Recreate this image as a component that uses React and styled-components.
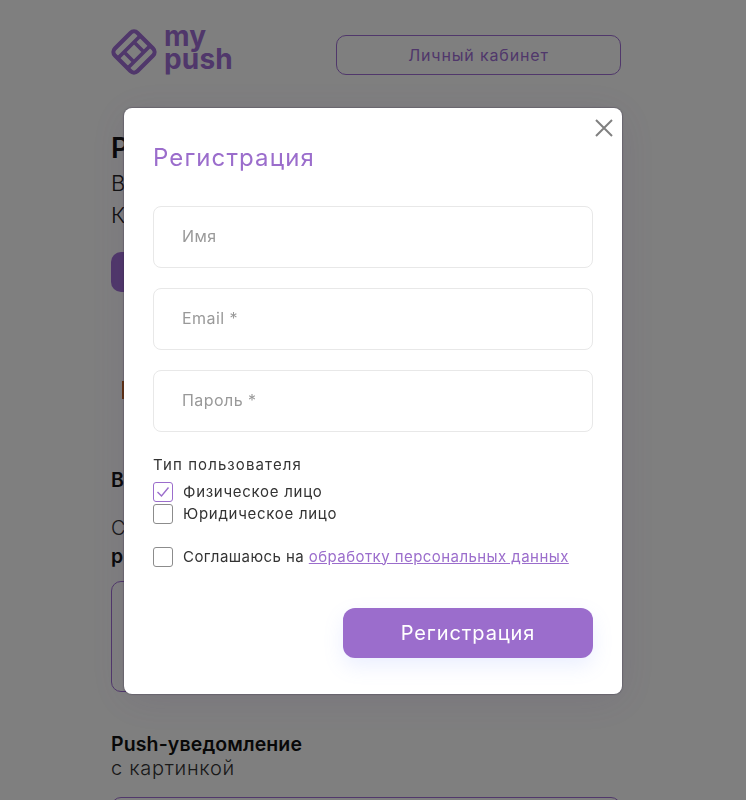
import styled, { createGlobalStyle } from "styled-components";

const GlobalStyle = createGlobalStyle`
  html, body {
    margin: 0;
    padding: 0;
    background: #fff;
  }
  * {
    box-sizing: border-box;
  }
`;

const font = `"Inter", "Open Sans", sans-serif`;
const purple = "#9b6dcc";
const dimPurple = "#a06fd6";

const Logo = () => (
  <svg width="46" height="46" viewBox="0 0 46 46" fill="none" stroke={dimPurple} strokeWidth="3.6" strokeLinejoin="round">
    <g transform="rotate(45 23 23)">
      <rect x="7" y="7" width="32" height="32" rx="5" strokeWidth="4.2" />
      <path d="M16 7 V39 M30 7 V39 M16 16 H30 M16 30 H30" />
    </g>
  </svg>
);

const App = () => {
  return (
    <>
      <GlobalStyle />
      <Page>
        <Header>
          <Brand>
            <Logo />
            <BrandName>
              my
              <br />
              push
            </BrandName>
          </Brand>
          <CabinetButton>Личный кабинет</CabinetButton>
        </Header>
        <Intro>
          <BackTitle>Р</BackTitle>
          <BackLine>В</BackLine>
          <BackLine>К</BackLine>
          <BackButton />
          <BackMark />
        </Intro>
        <Section>
          <BackHeading>В</BackHeading>
          <BackText $top={24}>С</BackText>
          <BackHeading $top={4}>р</BackHeading>
          <BackBox $top={13} $height={111} />
        </Section>
        <PushSection>
          <BackHeading>Push-уведомление</BackHeading>
          <BackText>с картинкой</BackText>
          <BackBox $top={17} $height={60} />
        </PushSection>
      </Page>

      <Overlay>
        <Modal>
          <CloseButton aria-label="Закрыть">
            <svg width="18" height="18" viewBox="0 0 18 18" stroke="#808080" strokeWidth="2" fill="none">
              <path d="M1 1 L17 17 M17 1 L1 17" />
            </svg>
          </CloseButton>
          <ModalTitle>Регистрация</ModalTitle>
          <Field placeholder="Имя" />
          <Field placeholder="Email *" />
          <Field placeholder="Пароль *" />
          <TypeLabel>Тип пользователя</TypeLabel>
          <CheckRow>
            <Box $checked>
              <svg width="14" height="12" viewBox="0 0 14 12" fill="none" stroke={purple} strokeWidth="1.4">
                <path d="M1.5 6 L5.5 10 L12.5 1.5" />
              </svg>
            </Box>
            <CheckText>Физическое лицо</CheckText>
          </CheckRow>
          <CheckRow>
            <Box />
            <CheckText>Юридическое лицо</CheckText>
          </CheckRow>
          <AgreeRow>
            <Box />
            <AgreeText>
              Соглашаюсь на <AgreeLink href="#">обработку персональных данных</AgreeLink>
            </AgreeText>
          </AgreeRow>
          <Actions>
            <SubmitButton>Регистрация</SubmitButton>
          </Actions>
        </Modal>
      </Overlay>
    </>
  );
};

const Page = styled.div`
  width: 510px;
  height: 800px;
  margin-left: 111px;
  overflow: hidden;
  font-family: ${font};
  color: #222;
`;

const Header = styled.header`
  display: flex;
  justify-content: space-between;
  align-items: flex-start;
  height: 77px;
  padding-top: 29px;
`;

const Brand = styled.div`
  display: flex;
  align-items: flex-start;
  gap: 7px;
`;

const BrandName = styled.div`
  margin-top: -4px;
  font-size: 28px;
  font-weight: 700;
  line-height: 23px;
  letter-spacing: 0.2px;
  color: ${dimPurple};
`;

const CabinetButton = styled.button`
  width: 285px;
  height: 40px;
  margin-top: 6px;
  background: transparent;
  border: 1px solid ${dimPurple};
  border-radius: 10px;
  font-family: ${font};
  font-size: 16px;
  letter-spacing: 0.85px;
  color: ${dimPurple};
`;

const Intro = styled.div`
  display: flex;
  flex-direction: column;
  padding-top: 52px;
`;

const BackTitle = styled.div`
  font-size: 28px;
  font-weight: 600;
  line-height: 38px;
  color: #111;
`;

const BackLine = styled.div`
  font-size: 22px;
  font-weight: 300;
  line-height: 32px;
`;

const BackButton = styled.div`
  width: 60px;
  height: 40px;
  margin-top: 21px;
  border-radius: 10px;
  background: ${dimPurple};
`;

const BackMark = styled.div`
  width: 3px;
  height: 18px;
  margin: 89px 0 1px 11px;
  background: #c8641a;
`;

const Section = styled.section`
  display: flex;
  flex-direction: column;
  padding-top: 68px;
`;

const BackHeading = styled.div`
  margin-top: ${(props) => props.$top || 0}px;
  font-size: 19.5px;
  font-weight: 600;
  line-height: 24px;
  letter-spacing: 0.12px;
  color: #111;
`;

const BackText = styled.div`
  margin-top: ${(props) => props.$top || 0}px;
  font-size: 20px;
  font-weight: 300;
  line-height: 24px;
  letter-spacing: 0.7px;
  color: #333;
`;

const BackBox = styled.div`
  flex: none;
  height: ${(props) => props.$height}px;
  margin-top: ${(props) => props.$top}px;
  border: 1px solid ${dimPurple};
  border-radius: 10px;
  background: #fff;
`;

const PushSection = styled.section`
  display: flex;
  flex-direction: column;
  padding-top: 40px;
`;

const Overlay = styled.div`
  position: fixed;
  inset: 0;
  background: rgba(0, 0, 0, 0.5);
`;

const Modal = styled.div`
  position: absolute;
  left: 124px;
  top: 108px;
  width: 498px;
  height: 586px;
  padding: 34px 29px 0;
  background: #fff;
  border-radius: 8px;
  box-shadow: 0 0 1px 1px rgba(40, 30, 60, 0.25), 0 6px 40px rgba(70, 50, 110, 0.12);
  font-family: ${font};
`;

const CloseButton = styled.button`
  position: absolute;
  top: 11px;
  right: 9px;
  display: flex;
  padding: 0;
  background: none;
  border: none;
`;

const ModalTitle = styled.h2`
  margin: 0 0 32px;
  font-size: 24px;
  font-weight: 400;
  line-height: 32px;
  letter-spacing: 1.1px;
  color: ${purple};
`;

const Field = styled.input`
  display: block;
  width: 100%;
  height: 62px;
  margin-bottom: 20px;
  padding: 0 28px 2px;
  background: #fff;
  border: 1px solid #e8e8e8;
  border-radius: 8px;
  font-family: ${font};
  font-size: 16px;
  letter-spacing: 0.45px;

  &::placeholder {
    color: #999;
    opacity: 1;
  }
`;

const TypeLabel = styled.div`
  margin: 22px 0 5px;
  font-size: 15px;
  line-height: 22px;
  letter-spacing: 1.1px;
  color: #333;
`;

const CheckRow = styled.label`
  display: flex;
  align-items: center;
  gap: 10px;
  height: 22px;
`;

const AgreeRow = styled(CheckRow)`
  margin-top: 21px;
`;

const Box = styled.span`
  display: flex;
  align-items: center;
  justify-content: center;
  flex: none;
  width: 20px;
  height: 20px;
  border: 1px solid ${(props) => (props.$checked ? purple : "#8c8c8c")};
  border-radius: 3px;
`;

const CheckText = styled.span`
  margin-top: -2px;
  font-size: 15px;
  letter-spacing: 0.72px;
  color: #333;
`;

const AgreeText = styled(CheckText)`
  letter-spacing: 0.44px;
`;

const AgreeLink = styled.a`
  color: ${purple};
  text-decoration: underline;
`;

const Actions = styled.div`
  display: flex;
  justify-content: flex-end;
  margin-top: 40px;
`;

const SubmitButton = styled.button`
  width: 250px;
  height: 50px;
  background: ${purple};
  border: none;
  border-radius: 12px;
  box-shadow: 0 8px 20px rgba(120, 150, 255, 0.15);
  font-family: ${font};
  font-size: 20px;
  letter-spacing: 0.9px;
  color: #fff;
`;

export default App;
